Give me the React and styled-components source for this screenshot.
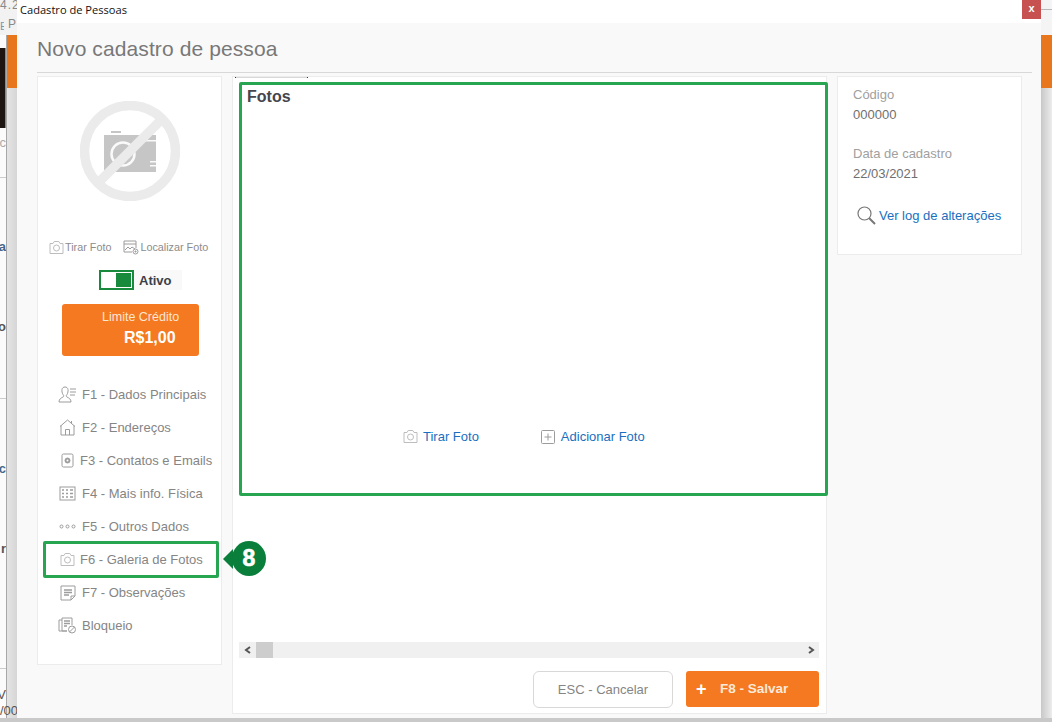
import React from 'react'
import styled, { createGlobalStyle } from 'styled-components'

const GlobalStyle = createGlobalStyle`
  html, body { margin: 0; padding: 0; }
  body {
    width: 1052px;
    height: 722px;
    overflow: hidden;
    font-family: "Liberation Sans", Arial, sans-serif;
  }
`

const iconProps = { fill: 'none', stroke: '#9c9c9c', strokeWidth: 1 }

const NoPhotoIcon = () => (
  <svg width="100" height="100" viewBox="0 0 100 100">
    <path d="M31 30h10v2H31z" fill="#c6c6c6" />
    <path d="M24 34h52v37H24z" fill="#c6c6c6" />
    <path d="M63 39h13v1.500H63zM70 60h6v1.500h-6zM70 64h6v1.500h-6z" fill="#fafafa" />
    <circle cx="43" cy="53" r="11.500" fill="none" stroke="#fafafa" strokeWidth="2.500" />
    <circle cx="50" cy="50" r="45.500" fill="none" stroke="#ebebeb" strokeWidth="9.500" />
    <path d="M17 83L83 17" stroke="#ebebeb" strokeWidth="9.500" />
  </svg>
)

const CameraIcon = ({ size = 15 }) => (
  <svg width={size} height={size} viewBox="0 0 15 15" {...iconProps} stroke="#bdbdbd">
    <path d="M1 3.500h3l1.200-2h4.600l1.200 2h3v10H1z" />
    <circle cx="7.500" cy="8" r="3" />
  </svg>
)

const PhotoSearchIcon = () => (
  <svg width="16" height="15" viewBox="0 0 16 15" {...iconProps}>
    <path d="M9 12H1V1h12v7" />
    <path d="M1 4h12" />
    <path d="M2 10l3-3 2 2 2-2 3 2" />
    <circle cx="12.500" cy="11.500" r="2.500" />
    <path d="M11.500 11.500h2M12.500 10.500v2" />
  </svg>
)

const UserListIcon = () => (
  <svg width="19" height="17" viewBox="0 0 19 17" {...iconProps}>
    <path d="M1 16c0-3 2-4 4-5 1-.5 1-1.500 0-2.500C4 7 3.800 5 4 3.500 4.300 1.800 5.500 1 7 1s2.700.8 3 2.500c.2 1.500 0 3.500-1 5-1 1-1 2 0 2.500 2 1 4 2 4 5z" />
    <path d="M12 3h6M12 6h6M12 9h5" />
  </svg>
)

const HouseIcon = () => (
  <svg width="17" height="17" viewBox="0 0 17 17" {...iconProps}>
    <path d="M1 7.500L8.500 1 16 7.500" />
    <path d="M2 6.500V16h13V6.500" />
    <path d="M6.500 16v-5.500h4V16" />
    <path d="M12.500 2v2.500" />
  </svg>
)

const ContactIcon = () => (
  <svg width="13" height="15" viewBox="0 0 13 15" {...iconProps}>
    <rect x="1" y="1" width="11" height="13" rx="1.500" />
    <circle cx="6.500" cy="7.500" r="2.500" fill="#9c9c9c" />
    <circle cx="6.500" cy="7.500" r="1" fill="#fff" stroke="none" />
  </svg>
)

const TableIcon = () => (
  <svg width="17" height="15" viewBox="0 0 17 15" {...iconProps}>
    <rect x="1" y="1" width="15" height="13" />
    <path d="M3 4h2M3 7.500h2M3 11h2M7 4h2M7 7.500h2M7 11h2M11 4h3M11 7.500h3M11 11h3" strokeWidth="1.500" />
  </svg>
)

const DotsIcon = () => (
  <svg width="17" height="5" viewBox="0 0 17 5" {...iconProps}>
    <circle cx="2.500" cy="2.500" r="1.500" />
    <circle cx="8.500" cy="2.500" r="1.500" />
    <circle cx="14.500" cy="2.500" r="1.500" />
  </svg>
)

const NoteIcon = () => (
  <svg width="16" height="16" viewBox="0 0 16 16" {...iconProps}>
    <path d="M1 1h14v10l-4 4H1z" />
    <path d="M15 11h-4v4" />
    <path d="M4 5h8M4 7.500h8M4 10h5" strokeWidth="1.300" />
  </svg>
)

const BlockIcon = () => (
  <svg width="19" height="17" viewBox="0 0 19 17" {...iconProps}>
    <path d="M4 1h10v7M9 14H4V1" />
    <path d="M4 3H1v11h8" />
    <path d="M6 4h6M6 6.500h6M6 9h3" strokeWidth="1.300" />
    <circle cx="14" cy="12.500" r="3.500" />
    <path d="M11.500 15l5-5" />
  </svg>
)

const PlusBoxIcon = () => (
  <svg width="14" height="14" viewBox="0 0 14 14" {...iconProps}>
    <rect x="0.500" y="0.500" width="13" height="13" rx="1" />
    <path d="M3.500 7h7M7 3.500v7" />
  </svg>
)

const SearchIcon = () => (
  <svg width="19" height="19" viewBox="0 0 19 19" fill="none" stroke="#777">
    <circle cx="7.500" cy="7.500" r="6.500" strokeWidth="1.200" />
    <path d="M12 12l6 6" strokeWidth="2" />
  </svg>
)

const Chevron = ({ left }) => (
  <svg width="8" height="8" viewBox="0 0 8 8" fill="none" stroke="#555" strokeWidth="2">
    <path d={left ? 'M6 1L2 4l4 3' : 'M2 1l4 3-4 3'} />
  </svg>
)

const navItems = [
  { label: 'F1 - Dados Principais', icon: <UserListIcon />, indent: 45 },
  { label: 'F2 - Endereços', icon: <HouseIcon />, indent: 45 },
  { label: 'F3 - Contatos e Emails', icon: <ContactIcon />, indent: 43 },
  { label: 'F4 - Mais info. Física', icon: <TableIcon />, indent: 45 },
  { label: 'F5 - Outros Dados', icon: <DotsIcon />, indent: 45 },
  { label: 'F6 - Galeria de Fotos', icon: <CameraIcon />, indent: 43, active: true },
  { label: 'F7 - Observações', icon: <NoteIcon />, indent: 45 },
  { label: 'Bloqueio', icon: <BlockIcon />, indent: 45 },
]

function App() {
  return (
    <Page>
      <GlobalStyle />
      <LeftStrip>
        <StripTop>
          <span>4.2</span>
          <StripRow>
            <StripEdge>E:</StripEdge>
            <span>P</span>
          </StripRow>
        </StripTop>
        <StripBody>
          <BehindApp>
            <BehindLogo />
            <Fragment $top={8} $color="#aaa">c</Fragment>
            <BehindRule $top={27} />
            <Fragment $top={62} $color="#44688c" $bold>la</Fragment>
            <Fragment $top={66} $color="#555" $bold>o</Fragment>
            <BehindRule $top={64} />
            <Fragment $top={63} $color="#44688c" $bold>c</Fragment>
            <Fragment $top={66} $color="#555" $bold>r</Fragment>
            <BehindRule $top={112} />
            <Fragment $top={19} $color="#555">V</Fragment>
            <Fragment $top={2} $color="#555" $wide>/00</Fragment>
          </BehindApp>
          <Shade>
            <OrangeBar />
          </Shade>
        </StripBody>
      </LeftStrip>

      <Modal>
        <TitleBar>
          <span>Cadastro de Pessoas</span>
          <CloseButton>x</CloseButton>
        </TitleBar>
        <Header>Novo cadastro de pessoa</Header>
        <Columns>
          <SidePanel>
            <PhotoHolder>
              <NoPhotoIcon />
            </PhotoHolder>
            <PhotoActions>
              <PhotoAction><CameraIcon />Tirar Foto</PhotoAction>
              <PhotoAction><PhotoSearchIcon />Localizar Foto</PhotoAction>
            </PhotoActions>
            <StatusRow>
              <Toggle><ToggleKnob /></Toggle>
              <StatusLabel>Ativo</StatusLabel>
            </StatusRow>
            <CreditCard>
              <CreditLabel>Limite Crédito</CreditLabel>
              <CreditValue>R$1,00</CreditValue>
            </CreditCard>
            <Nav>
              {navItems.map((item) => (
                <NavItem key={item.label} $active={item.active}>
                  <NavIcon>{item.icon}</NavIcon>
                  <NavText $indent={item.indent}>{item.label}</NavText>
                  {item.active && (
                    <Badge>
                      <BadgeArrow />
                      <BadgeCircle>8</BadgeCircle>
                    </Badge>
                  )}
                </NavItem>
              ))}
            </Nav>
          </SidePanel>

          <MainPanel>
            <TopTick />
            <PhotoBox>
              <PhotoTitle>Fotos</PhotoTitle>
              <PhotoLinks>
                <LinkRow><CameraIcon /><BlueText>Tirar Foto</BlueText></LinkRow>
                <LinkRow $gap={6}><PlusBoxIcon /><BlueText>Adicionar Foto</BlueText></LinkRow>
              </PhotoLinks>
            </PhotoBox>
            <ScrollBar>
              <ScrollEnd><Chevron left /></ScrollEnd>
              <ScrollThumb />
              <ScrollEnd $right><Chevron /></ScrollEnd>
            </ScrollBar>
            <Footer>
              <CancelButton>ESC - Cancelar</CancelButton>
              <SaveButton><PlusSign>+</PlusSign>F8 - Salvar</SaveButton>
            </Footer>
          </MainPanel>

          <InfoPanel>
            <InfoBlock>
              <InfoLabel>Código</InfoLabel>
              <InfoValue>000000</InfoValue>
            </InfoBlock>
            <InfoBlock>
              <InfoLabel>Data de cadastro</InfoLabel>
              <InfoValue>22/03/2021</InfoValue>
            </InfoBlock>
            <LogLink><SearchIcon /><BlueText>Ver log de alterações</BlueText></LogLink>
          </InfoPanel>
        </Columns>
      </Modal>

      <RightStrip>
        <RightTop />
        <OrangeBar />
        <RightShade />
      </RightStrip>
    </Page>
  )
}

const Page = styled.div`
  display: flex;
  width: 1052px;
  height: 722px;
  background: #c9c9c9;
  overflow: hidden;
`

const LeftStrip = styled.div`
  width: 17px;
  height: 718px;
  flex-shrink: 0;
  display: flex;
  flex-direction: column;
`

const StripTop = styled.div`
  height: 35px;
  background: #f2f2f2;
  font-size: 12px;
  color: #888;
  letter-spacing: 1px;
  line-height: 10px;
  overflow: hidden;
`

const StripRow = styled.div`
  display: flex;
  margin-top: 7px;
  line-height: 14px;
`

const StripEdge = styled.div`
  width: 6px;
  margin: 2px 4px 0 0;
  overflow: hidden;
  font-size: 11px;
  letter-spacing: 0;
  color: #7d96ad;
`

const StripBody = styled.div`
  flex: 1;
  display: flex;
  min-height: 0;
`

const BehindApp = styled.div`
  width: 6px;
  flex-shrink: 0;
  display: flex;
  flex-direction: column;
  background: #fbfbfb;
  border-right: 1px solid #a8a8a8;
`

const BehindLogo = styled.div`
  width: 6px;
  height: 80px;
  margin-top: 13px;
  background: #1c1511;
  border-right: 1px solid #c87a30;
  box-sizing: border-box;
`

const BehindRule = styled.div`
  height: 1px;
  margin-top: ${(p) => p.$top}px;
  background: #ccc;
`

const Fragment = styled.div`
  margin-top: ${(p) => p.$top}px;
  width: ${(p) => (p.$wide ? '17px' : '6px')};
  display: flex;
  justify-content: ${(p) => (p.$wide ? 'flex-start' : 'flex-end')};
  font-size: 13px;
  line-height: 14px;
  white-space: nowrap;
  color: ${(p) => p.$color};
  font-weight: ${(p) => (p.$bold ? 'bold' : 'normal')};
  overflow: hidden;
  position: relative;
`

const Shade = styled.div`
  flex: 1;
  background: linear-gradient(to right, #e4e4e4, #d6d6d6);
`

const OrangeBar = styled.div`
  height: 53px;
  flex-shrink: 0;
  background: #e8761c;
`

const RightStrip = styled.div`
  flex: 1;
  height: 718px;
  display: flex;
  flex-direction: column;
`

const RightTop = styled.div`
  height: 35px;
  flex-shrink: 0;
  box-sizing: border-box;
  background: #f4f4f4;
  background-image: linear-gradient(#b8b8b8, #b8b8b8);
  background-size: 100% 1px;
  background-position: 0 9px;
  background-repeat: no-repeat;
`

const RightShade = styled.div`
  flex: 1;
  background: linear-gradient(to right, #c8c8c8, #ececec);
`

const Modal = styled.div`
  width: 1024px;
  height: 718px;
  flex-shrink: 0;
  display: flex;
  flex-direction: column;
  background: #f9f9f9;
`

const TitleBar = styled.div`
  height: 23px;
  flex-shrink: 0;
  display: flex;
  justify-content: space-between;
  background: #fff;
  padding-left: 3px;
  font-family: "Open Sans", sans-serif;
  font-size: 11.1px;
  line-height: 19px;
  color: #111;
`

const CloseButton = styled.div`
  width: 19px;
  height: 19px;
  background: #c75050;
  color: #fff;
  font-family: "Liberation Sans", sans-serif;
  font-weight: bold;
  font-size: 11px;
  line-height: 17px;
  text-align: center;
`

const Header = styled.h1`
  margin: 0 9px 0 20px;
  height: 50px;
  flex-shrink: 0;
  box-sizing: border-box;
  border-bottom: 1px solid #d8d8d8;
  font-size: 21px;
  letter-spacing: 0.1px;
  font-weight: normal;
  line-height: 52px;
  color: #787878;
`

const Columns = styled.div`
  flex: 1;
  min-height: 0;
  display: flex;
  align-items: flex-start;
  gap: 10px;
  padding: 3px 0 4px 20px;
`

const Panel = styled.div`
  box-sizing: border-box;
  background: #fff;
  border: 1px solid #ececec;
`

const SidePanel = styled(Panel)`
  width: 185px;
  height: 589px;
  flex-shrink: 0;
`

const PhotoHolder = styled.div`
  display: flex;
  justify-content: center;
  padding-top: 24px;
`

const PhotoActions = styled.div`
  display: flex;
  gap: 12px;
  margin: 39px 0 0 11px;
`

const PhotoAction = styled.div`
  display: flex;
  align-items: center;
  gap: 1px;
  font-size: 10.8px;
  line-height: 15px;
  color: #8c8c8c;
  white-space: nowrap;
`

const StatusRow = styled.div`
  display: flex;
  width: 83px;
  height: 20px;
  margin: 15px 0 0 61px;
  background: #f9f9f9;
`

const Toggle = styled.div`
  width: 35px;
  height: 20px;
  box-sizing: border-box;
  border: 2px solid #178a3c;
  background: #fff;
  padding: 1px;
  display: flex;
  justify-content: flex-end;
`

const ToggleKnob = styled.div`
  width: 15px;
  background: #178a3c;
`

const StatusLabel = styled.div`
  margin-left: 5px;
  font-size: 13px;
  font-weight: bold;
  line-height: 22px;
  color: #3c3f48;
`

const CreditCard = styled.div`
  width: 137px;
  height: 52px;
  margin: 14px 0 0 24px;
  border-radius: 3px;
  background: #f47920;
  color: #fff;
  display: flex;
  flex-direction: column;
  position: relative;
`

const CreditLabel = styled.div`
  margin: 6px 0 0 40px;
  font-size: 12.5px;
  line-height: 14px;
  color: #fde6d3;
`

const CreditValue = styled.div`
  margin: 5px 0 0 62px;
  font-size: 16px;
  font-weight: bold;
  line-height: 18px;
`

const Nav = styled.div`
  display: flex;
  flex-direction: column;
  margin-top: 22px;
`

const NavItem = styled.div`
  position: relative;
  height: 33px;
  display: flex;
  align-items: center;
  ${(p) =>
    p.$active &&
    `
    &::before {
      content: '';
      position: absolute;
      left: 5px;
      top: -2px;
      width: 176px;
      height: 37px;
      box-sizing: border-box;
      border: 3px solid #27a550;
      border-radius: 2px;
    }
  `}
`

const NavIcon = styled.div`
  position: absolute;
  left: 19px;
  width: 21px;
  display: flex;
  justify-content: center;
`

const NavText = styled.div`
  margin-left: ${(p) => p.$indent - 1}px;
  font-size: 13px;
  color: #858585;
  white-space: nowrap;
`

const Badge = styled.div`
  position: absolute;
  left: 185px;
  top: -2px;
  display: flex;
  align-items: center;
  z-index: 2;
`

const BadgeArrow = styled.div`
  width: 0;
  height: 0;
  border-top: 10px solid transparent;
  border-bottom: 10px solid transparent;
  border-right: 10px solid #0a7f3b;
  margin-right: -1px;
`

const BadgeCircle = styled.div`
  width: 34px;
  height: 35px;
  border-radius: 50%;
  background: #0a7f3b;
  color: #fff;
  font-size: 23px;
  font-weight: bold;
  -webkit-text-stroke: 0.6px #fff;
  line-height: 35px;
  text-align: center;
`

const MainPanel = styled(Panel)`
  width: 595px;
  height: 638px;
  flex-shrink: 0;
  position: relative;
  display: flex;
  flex-direction: column;
  padding: 5px 7px 0 6px;
`

const TopTick = styled.div`
  position: absolute;
  left: 2px;
  top: 0;
  width: 71px;
  height: 1px;
  background: #d8d8d8;
  border-left: 1px solid #333;
  border-right: 1px solid #333;
`

const PhotoBox = styled.div`
  height: 414px;
  margin-right: -9px;
  flex-shrink: 0;
  box-sizing: border-box;
  border: 3px solid #27a550;
  border-radius: 2px;
  display: flex;
  flex-direction: column;
`

const PhotoTitle = styled.div`
  margin: 3px 0 0 5px;
  font-size: 16px;
  font-weight: bold;
  line-height: 18px;
  color: #45454d;
`

const PhotoLinks = styled.div`
  margin-top: auto;
  display: flex;
  gap: 62px;
  padding: 0 0 49px 161px;
`

const LinkRow = styled.div`
  display: flex;
  align-items: center;
  gap: ${(p) => p.$gap || 5}px;
`

const BlueText = styled.span`
  font-size: 13px;
  color: #1a6fc0;
  white-space: nowrap;
`

const ScrollBar = styled.div`
  margin-top: auto;
  height: 16px;
  flex-shrink: 0;
  display: flex;
  align-items: center;
  background: #f0f0f0;
`

const ScrollEnd = styled.div`
  width: 17px;
  display: flex;
  justify-content: center;
  margin-left: ${(p) => (p.$right ? 'auto' : '0')};
`

const ScrollThumb = styled.div`
  width: 17px;
  height: 16px;
  background: #cdcdcd;
`

const Footer = styled.div`
  height: 37px;
  flex-shrink: 0;
  display: flex;
  justify-content: flex-end;
  gap: 13px;
  margin: 13px 0 5px;
`

const CancelButton = styled.div`
  width: 140px;
  height: 37px;
  box-sizing: border-box;
  border: 1px solid #d8d8d8;
  border-radius: 6px;
  background: #fff;
  font-size: 13px;
  line-height: 35px;
  text-align: center;
  color: #858585;
`

const SaveButton = styled.div`
  width: 133px;
  height: 36px;
  box-sizing: border-box;
  border-radius: 3px;
  background: #f47920;
  padding-left: 10px;
  font-size: 13.5px;
  font-weight: bold;
  line-height: 36px;
  color: #fde9d9;
  display: flex;
`

const PlusSign = styled.span`
  width: 24px;
  font-size: 18px;
  color: #fff;
`

const InfoPanel = styled(Panel)`
  width: 185px;
  height: 179px;
  flex-shrink: 0;
  padding: 10px 15px;
`

const InfoBlock = styled.div`
  margin-bottom: 24px;
`

const InfoLabel = styled.div`
  font-size: 13px;
  line-height: 16px;
  color: #a0a0a0;
`

const InfoValue = styled.div`
  margin-top: 4px;
  font-size: 13px;
  line-height: 15px;
  color: #6f6f6f;
`

const LogLink = styled.div`
  display: flex;
  align-items: center;
  gap: 3px;
  margin: 25px 0 0 4px;
`

export default App
